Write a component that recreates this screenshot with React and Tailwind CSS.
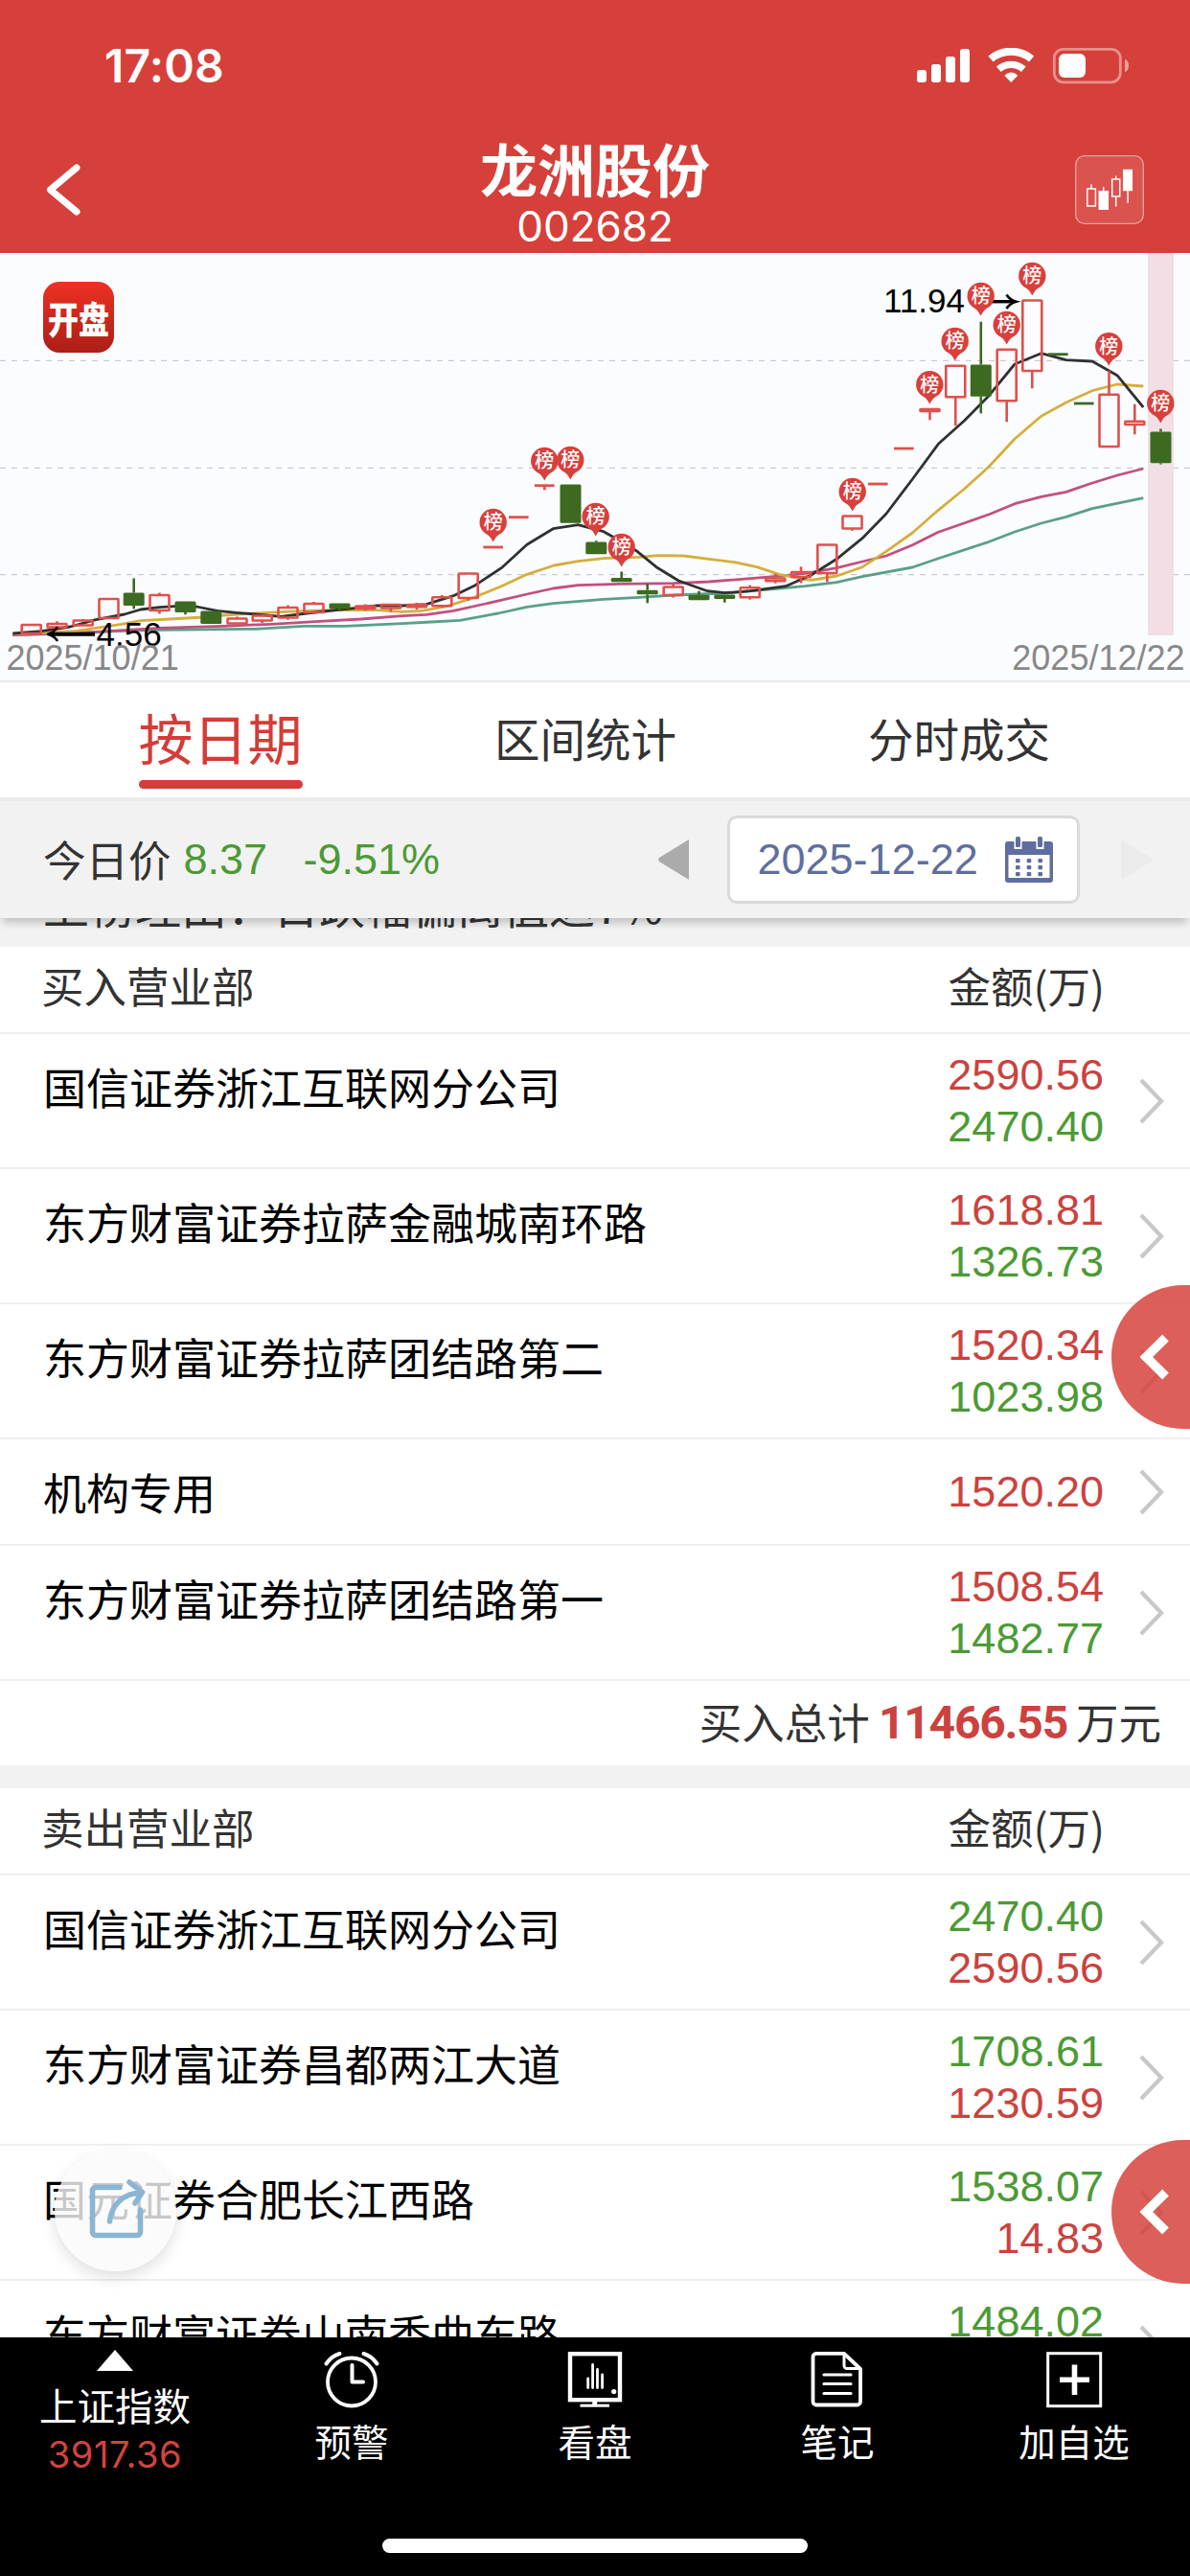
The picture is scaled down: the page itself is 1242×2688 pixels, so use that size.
import React from "react";

const RED = "#e0504b";
const GREEN = "#3c6a20";

// Scales a run of 3x grid points into chart coordinates, starting at (ox, oy).
const run = (ox, oy, pts) =>
  pts.map(([x, y]) => `${(ox + x / 3).toFixed(1)},${(oy + y / 3).toFixed(1)}`).join(" ");

const averages = [
  {
    color: "#5aa088",
    points: [
      run(0, 260, [[40, 1208], [220, 1203], [360, 1196], [500, 1192], [700, 1190], [800, 1189], [950, 1180], [1080, 1180]]),
      run(420, 420, [[0, 692], [90, 687], [180, 682], [300, 660], [390, 640], [472, 629], [630, 616], [740, 610], [850, 603], [1010, 597], [1180, 582], [1260, 575]]),
      run(840, 260, [[0, 1055], [100, 1043], [180, 1025], [337, 996], [418, 968], [577, 916], [657, 885], [740, 858], [818, 838], [900, 812], [1060, 779]]),
    ].join(" "),
  },
  {
    color: "#c2507f",
    points: [
      run(0, 260, [[40, 1208], [300, 1198], [500, 1186], [700, 1180], [850, 1174], [1000, 1165], [1130, 1158]]),
      run(420, 420, [[0, 668], [75, 664], [160, 652], [260, 630], [390, 600], [472, 582], [550, 572], [680, 568], [850, 566], [960, 561], [1090, 551], [1200, 542]]),
      run(840, 260, [[0, 1015], [100, 998], [180, 978], [255, 960], [337, 926], [418, 886], [500, 857], [577, 830], [657, 797], [740, 775], [818, 760], [900, 732], [978, 708], [1060, 687]]),
    ].join(" "),
  },
  {
    color: "#d5ae3c",
    points: [
      run(0, 260, [[40, 1205], [240, 1195], [380, 1174], [440, 1163], [530, 1158], [640, 1152], [700, 1146], [830, 1138], [960, 1132], [1060, 1130], [1180, 1130]]),
      run(420, 420, [[0, 655], [60, 652], [140, 638], [225, 610], [310, 575], [390, 538], [475, 510], [550, 497], [630, 488], [740, 484], [800, 479], [880, 480], [960, 490], [1040, 500], [1110, 515], [1180, 538]]),
      run(840, 260, [[0, 1034], [20, 1036], [100, 1023], [180, 995], [255, 946], [337, 888], [418, 817], [500, 750], [577, 680], [657, 594], [740, 523], [818, 480], [900, 443], [978, 423], [1060, 429]]),
    ].join(" "),
  },
  {
    color: "#2f3133",
    points: [
      run(0, 260, [[40, 1203], [130, 1196], [220, 1182], [300, 1160], [390, 1143], [440, 1128], [500, 1121], [560, 1117], [615, 1119], [680, 1132], [740, 1138], [800, 1143], [880, 1150], [960, 1140], [1040, 1131], [1110, 1124], [1180, 1116]]),
      run(420, 420, [[0, 636], [75, 632], [160, 605], [225, 574], [310, 518], [390, 445], [472, 395], [550, 383], [630, 404], [665, 424], [735, 466], [795, 515], [865, 558], [955, 590], [1010, 596], [1090, 590], [1200, 575]]),
      run(840, 260, [[20, 1020], [100, 970], [180, 905], [255, 828], [337, 720], [418, 610], [500, 536], [577, 458], [657, 360], [740, 326], [818, 347], [900, 351], [978, 395], [1060, 495]]),
    ].join(" "),
  },
];

// [centre x, body top, body bottom, high, low, direction]
const candles = [
  [32.7, 652, 661, 652, 661, "up"],
  [59.5, 651, 654.5, 648.3, 656, "up"],
  [86.7, 647.5, 652.5, 646, 652, "up"],
  [113.5, 625, 645, 625, 645, "up"],
  [139.7, 618.5, 632, 603.5, 635.3, "down"],
  [166.5, 621, 637, 618.5, 640.5, "up"],
  [193.5, 627.5, 639, 627.5, 641.3, "down"],
  [220.3, 637.5, 651, 637.5, 651, "down"],
  [247.5, 645.5, 650.5, 643.5, 652.5, "up"],
  [273.7, 642.5, 647.5, 641, 650, "up"],
  [300.5, 634, 644.5, 631.5, 646.8, "up"],
  [327.5, 630, 639, 628, 639, "up"],
  [354.5, 629.5, 635.3, 629.5, 637.3, "down"],
  [381.3, 632.5, 635, 630.5, 637.3, "up"],
  [408, 631, 634.5, 630, 638.5, "up"],
  [435, 631, 633.3, 629, 636, "up"],
  [461.3, 623.3, 632.3, 621, 634, "up"],
  [488.7, 598.5, 624, 598.5, 626.7, "up"],
  [514.7, 571, 571, 571, 571, "up"],
  [541.3, 539.7, 539.7, 539.7, 539.7, "up"],
  [568.3, 506.7, 506.7, 506, 511.3, "up"],
  [595.5, 505.5, 545.7, 505.5, 545.7, "down"],
  [622.3, 565.5, 578.2, 564, 578, "down"],
  [648.7, 603, 607.3, 596.5, 607, "down"],
  [675.7, 615.7, 620.3, 609, 629.3, "down"],
  [702.7, 612.5, 621, 610, 623.5, "up"],
  [729.5, 620.7, 626.3, 616.7, 626, "down"],
  [756.3, 620.5, 625, 620.5, 628.7, "down"],
  [782.7, 613.3, 623.3, 610.5, 625.7, "up"],
  [809.3, 603.5, 606.3, 598.7, 608.7, "up"],
  [836, 597, 602, 591.3, 608.5, "up"],
  [863.3, 568.5, 598, 568.5, 607.3, "up"],
  [889.5, 538.5, 551.5, 538.5, 553.8, "up"],
  [916.3, 505, 505, 505, 505, "up"],
  [943.3, 468, 468, 468, 468, "up"],
  [970.5, 427, 429, 427, 438.3, "up"],
  [997.3, 381.7, 414.3, 381.7, 444.3, "up"],
  [1023.8, 380.5, 413.7, 335.7, 431.3, "down"],
  [1050.7, 364.8, 418.3, 364.8, 440.3, "up"],
  [1077.3, 313.5, 387, 313.5, 405.3, "up"],
  [1104.3, 369.7, 369.7, 369.7, 369.7, "down"],
  [1131.3, 421, 421, 421, 421, "down"],
  [1157.5, 411.7, 466, 386.7, 466, "up"],
  [1184.3, 439.8, 443, 421.7, 453.3, "up"],
  [1211.5, 450.5, 483.3, 447.5, 484.5, "down"],
];

const pins = [
  [514.7, 545], [568.3, 481], [595.3, 480], [621.7, 539], [648.7, 571], [889.7, 513],
  [970.3, 401.3], [996.7, 356], [1023.7, 309], [1050.7, 339], [1077.3, 288], [1157.3, 361.3], [1211.3, 421],
];

function Candle({ d: [x, top, bottom, high, low, dir] }) {
  const up = dir === "up";
  const color = up ? RED : GREEN;
  if (top === bottom) {
    return (
      <g stroke={color} strokeWidth="2.8">
        <path d={`M${x - 10.3} ${top}h20.6`} />
        {low > bottom && <path d={`M${x} ${top}V${low}`} />}
      </g>
    );
  }
  return (
    <g stroke={color} strokeWidth="2.6">
      {high < top && <path d={`M${x} ${high}V${top}`} />}
      {low > bottom && <path d={`M${x} ${bottom}V${low}`} />}
      {up ? (
        <rect x={x - 10} y={top} width="20" height={bottom - top} rx="0.6" fill="none" />
      ) : (
        <rect x={x - 11} y={top} width="22" height={bottom - top} rx="1.5" fill={color} stroke="none" />
      )}
    </g>
  );
}

function Pin({ x, y }) {
  return (
    <g>
      <circle cx={x} cy={y} r="14.2" fill="#d8403c" />
      <path d={`M${x - 9.5} ${y + 10}Q${x - 3} ${y + 14} ${x} ${y + 20.5}Q${x + 3} ${y + 14} ${x + 9.5} ${y + 10}Z`} fill="#d8403c" />
      <text x={x} y={y + 7.2} textAnchor="middle" fill="#fff" className="font-['Noto_Sans_CJK_SC',sans-serif] text-[20px] font-medium">
        榜
      </text>
    </g>
  );
}

function Chart() {
  return (
    <section className="relative h-[448px] shrink-0 border-b-2 border-[#e9eaec] bg-[#fbfcff]">
      <svg viewBox="0 264 1242 446" className="block h-[446px] w-[1242px]" fill="none">
        {[376.3, 488.3, 599.7].map((y) => (
          <path key={y} d={`M0 ${y}H1242`} stroke="#c9cbd4" strokeWidth="1.2" strokeDasharray="6 6" />
        ))}
        <rect x="1198" y="264" width="27" height="399" fill="#f1dfe5" />
        {averages.map((a) => (
          <polyline key={a.color} points={a.points} stroke={a.color} strokeWidth="2.8" strokeLinejoin="round" />
        ))}
        {candles.map((d) => (
          <Candle key={d[0]} d={d} />
        ))}
        <g fill="#000" className="font-['Liberation_Sans',sans-serif] text-[35px]">
          <text x="922" y="326">11.94</text>
          <text x="100.5" y="673.7">4.56</text>
        </g>
        <g stroke="#000">
          <path d="M1030 314.7H1058" strokeWidth="3.4" />
          <path d="M1050.5 307.5Q1054 313 1060.5 314.7Q1054 316.5 1050.5 322" strokeWidth="2.6" />
          <path d="M99 661.7H52" strokeWidth="4" />
          <path d="M60 654Q57 660 49.5 661.7Q57 663.5 60 669" strokeWidth="2.6" />
        </g>
        {pins.map(([x, y]) => (
          <Pin key={x} x={x} y={y} />
        ))}
        <g fill="#888" className="font-['Liberation_Sans',sans-serif] text-[36px]">
          <text x="6.500" y="698.7">2025/10/21</text>
          <text x="1236.500" y="698.7" textAnchor="end">2025/12/22</text>
        </g>
      </svg>
      <div className="absolute left-[45px] top-[30px] flex h-[74px] w-[74px] items-center justify-center rounded-[17px] bg-linear-to-b from-[#ee3124] to-[#ab1f17]">
        <span className="scale-y-120 whitespace-nowrap text-[32px] leading-none font-black text-white">开盘</span>
      </div>
    </section>
  );
}

function Header() {
  return (
    <header className="flex h-[264px] shrink-0 flex-col bg-[#d6403a] text-white">
      <div className="flex h-[137px] items-center justify-between pr-[63px] pl-[109px]">
        <span className="font-['Inter',sans-serif] text-[48px] leading-none font-semibold tracking-[0.2px]">17:08</span>
        <svg viewBox="957 49 222 38" className="h-[38px] w-[222px]" fill="none">
          <g fill="#fff">
            <rect x="957" y="72" width="10" height="13" rx="3" />
            <rect x="972" y="66" width="10" height="19" rx="3" />
            <rect x="987" y="58" width="10" height="27" rx="3" />
            <rect x="1002" y="50" width="10" height="35" rx="3" />
            <path d="M1055.3 85L1048.3 77.7Q1055.3 71.3 1062.3 77.7Z" />
            <rect x="1105" y="55" width="28" height="25" rx="6" />
            <path d="M1174 60.7Q1178 62.5 1178 67.5T1174 74.3Z" opacity="0.5" />
          </g>
          <path d="M1034 60.5A33 33 0 0 1 1076.6 60.5" stroke="#fff" strokeWidth="8" />
          <path d="M1042.3 71.2A19.8 19.8 0 0 1 1068.3 71.2" stroke="#fff" strokeWidth="7.4" />
          <rect x="1100.3" y="50.3" width="69" height="34.5" rx="9.5" stroke="#fff" strokeWidth="2.8" opacity="0.42" />
        </svg>
      </div>
      <div className="flex flex-1 items-start justify-between px-[48px]">
        <svg viewBox="48 168 72 60" className="mt-[31px] h-[60px] w-[72px]" fill="none">
          <path d="M80 175L52.5 198L80 221" stroke="#fff" strokeWidth="7" strokeLinecap="round" strokeLinejoin="round" />
        </svg>
        <div className="flex flex-col items-center">
          <h1 className="mt-[6px] text-[60px] leading-[64px] font-bold">龙洲股份</h1>
          <span className="mt-[6px] font-['Inter',sans-serif] text-[44px] leading-[46px] font-normal">002682</span>
        </div>
        <svg viewBox="1122 162 72 72" className="mt-[25px] h-[72px] w-[72px]" fill="none">
          <rect x="1122.7" y="162.7" width="70.6" height="70.6" rx="9" fill="#fff" fillOpacity="0.1" stroke="#fff" strokeOpacity="0.5" strokeWidth="1.3" />
          <g stroke="#fff" strokeWidth="1.5">
            <rect x="1134.8" y="197" width="8.6" height="18" />
            <path d="M1139 192.3V197" />
            <rect x="1147.3" y="199.7" width="9" height="18.5" fill="#fff" />
            <path d="M1151.7 195V200" />
            <rect x="1160.7" y="187" width="8" height="18" />
            <path d="M1164.7 183.5V187M1164.7 205V215.5" />
            <rect x="1172.7" y="177.5" width="8.6" height="21" fill="#fff" />
            <path d="M1177 199V211.7" />
          </g>
        </svg>
      </div>
    </header>
  );
}

function Tabs() {
  return (
    <nav className="flex h-[120px] shrink-0 items-start bg-white text-[47.5px] leading-[116px] text-[#333]">
      <div className="flex w-[460px] flex-col items-center">
        <span className="h-[102px] text-[57px] leading-[113px] text-[#d43c37]">按日期</span>
        <span className="h-[9px] w-[171px] rounded-full bg-[#d43c3a]" />
      </div>
      <span className="w-[302px] text-center">区间统计</span>
      <span className="w-[478px] text-center">分时成交</span>
    </nav>
  );
}

function CalendarIcon() {
  return (
    <svg viewBox="0 0 52 50" className="h-[50px] w-[52px]" fill="#5f6e9e">
      <path d="M4 6H48a3 3 0 0 1 3 3V46a3 3 0 0 1-3 3H4a3 3 0 0 1-3-3V9a3 3 0 0 1 3-3Z" />
      <rect x="4.5" y="20" width="43" height="24" fill="#fff" />
      <path d="M10.5 0h8v14h-8zM33.5 0h8v14h-8z" fill="#fff" />
      <rect x="12" y="1" width="5" height="11" rx="1.5" />
      <rect x="35" y="1" width="5" height="11" rx="1.5" />
      {[24, 31, 38].map((y) =>
        [12, 23.7, 35.4].map((x) => <rect key={`${x}-${y}`} x={x} y={y} width="4.6" height="4.2" rx="1" />)
      )}
    </svg>
  );
}

function PriceBar() {
  return (
    <div className="relative z-10 flex h-[126px] shrink-0 items-center border-t-4 border-[#ebebeb] bg-[#f2f2f2] pl-[45px] shadow-[0_8px_8px_-3px_rgba(0,0,0,0.2)]">
      <span className="-mt-[3px] text-[44.5px] leading-[60px] text-[#333]">今日价</span>
      <span className="ml-[13px] w-[125px] font-['Liberation_Sans',sans-serif] text-[45px] leading-[60px] text-[#4c9a35]">8.37</span>
      <span className="w-[369px] font-['Liberation_Sans',sans-serif] text-[45px] leading-[60px] text-[#4c9a35]">-9.51%</span>
      <svg viewBox="0 0 34 44" className="h-[44px] w-[34px]">
        <path d="M33 1V43L2 24Q0 22 2 20Z" fill="#ababab" />
      </svg>
      <div className="ml-[39px] flex h-[92px] w-[368px] items-center rounded-[10px] border-[3px] border-[#dadada] bg-white pl-[29px]">
        <span className="font-['Liberation_Sans',sans-serif] text-[45px] leading-[60px] text-[#5f6e9e]">2025-12-22</span>
        <span className="ml-[27px]">
          <CalendarIcon />
        </span>
      </div>
      <svg viewBox="0 0 34 44" className="ml-[42px] h-[44px] w-[34px]">
        <path d="M1 1V43L32 24Q34 22 32 20Z" fill="#ebebeb" />
      </svg>
    </div>
  );
}

function ListHead({ title }) {
  return (
    <div className="flex h-[91px] shrink-0 items-center justify-between border-b-2 border-[#efefef] bg-white pr-[89px] pb-[9px] pl-[43px] text-[44.5px] leading-[60px] text-[#333]">
      <span>{title}</span>
      <span>金额(万)</span>
    </div>
  );
}

function Row({ name, values, buy }) {
  const colors = buy ? ["text-[#cb423e]", "text-[#4c9a35]"] : ["text-[#4c9a35]", "text-[#cb423e]"];
  const height = values.length > 1 ? "h-[141px]" : "h-[111px]";
  return (
    <div className={`flex shrink-0 border-b-2 border-[#efefef] bg-white pl-[45px] ${height}`}>
      <span className="flex-1 pt-[25px] text-[45px] leading-[60px] text-black">{name}</span>
      <div className="flex flex-col justify-center text-right font-['Liberation_Sans',sans-serif] text-[45px] leading-[54px]">
        {values.map((v, i) => (
          <span key={v} className={colors[i]}>
            {v}
          </span>
        ))}
      </div>
      <svg viewBox="0 0 28 48" className="mr-[26px] ml-[36px] h-[48px] w-[28px] self-center" fill="none">
        <path d="M3 2L24 24L3 46" stroke="#c8c8c8" strokeWidth="4.2" />
      </svg>
    </div>
  );
}

const buys = [
  ["国信证券浙江互联网分公司", ["2590.56", "2470.40"]],
  ["东方财富证券拉萨金融城南环路", ["1618.81", "1326.73"]],
  ["东方财富证券拉萨团结路第二", ["1520.34", "1023.98"]],
  ["机构专用", ["1520.20"]],
  ["东方财富证券拉萨团结路第一", ["1508.54", "1482.77"]],
];

const sells = [
  ["国信证券浙江互联网分公司", ["2470.40", "2590.56"]],
  ["东方财富证券昌都两江大道", ["1708.61", "1230.59"]],
  ["国元证券合肥长江西路", ["1538.07", "14.83"]],
  ["东方财富证券山南香曲东路", ["1484.02"]],
];

function Listing() {
  return (
    <main className="flex min-h-0 flex-1 flex-col overflow-hidden bg-[#f2f2f2]">
      <div className="flex h-[30px] shrink-0 items-end pb-[17px] pl-[45px]">
        <span className="whitespace-nowrap text-[48px] leading-[56px] text-[#333]">上榜理由：日跌幅偏离值达7%</span>
      </div>
      <ListHead title="买入营业部" />
      {buys.map(([name, values]) => (
        <Row key={name} name={name} values={values} buy />
      ))}
      <div className="mb-[24px] flex h-[88px] shrink-0 items-center justify-end bg-white pr-[30px] text-[44.5px] leading-[60px] text-[#333]">
        <span className="-mt-[4px]">买入总计</span>
        <span className="mx-[9px] font-['Roboto',sans-serif] text-[48px] leading-[60px] font-bold tracking-[-1.2px] text-[#cb423e]">11466.55</span>
        <span className="-mt-[4px]">万元</span>
      </div>
      <ListHead title="卖出营业部" />
      {sells.map(([name, values], i) => (
        <div key={name} className={i === 3 ? "-mb-px shrink-0" : "shrink-0"}>
          <Row name={name} values={i === 3 ? [...values, "\u00a0"] : values} />
        </div>
      ))}
    </main>
  );
}

function NavItem({ label, width, children }) {
  return (
    <div className={`flex flex-col items-center pt-[14px] ${width}`}>
      <svg viewBox="0 0 60 60" className="h-[60px] w-[60px]" fill="none" stroke="#fff">
        {children}
      </svg>
      <span className="mt-[8px] text-[38.5px] leading-[50px]">{label}</span>
    </div>
  );
}

function BottomNav() {
  return (
    <footer className="flex h-[249px] shrink-0 flex-col items-center justify-between bg-black pb-[24px] text-white">
      <div className="flex w-full">
        <div className="flex w-[240px] flex-col items-center pt-[13px]">
          <svg viewBox="0 0 38 22" className="h-[22px] w-[38px]">
            <path d="M19 0L38 22H0Z" fill="#fff" />
          </svg>
          <span className="mt-[10px] text-[39.5px] leading-[50px]">上证指数</span>
          <span className="mt-[3px] font-['Inter',sans-serif] text-[38px] leading-[48px] tracking-[0.6px] text-[#d2433f]">3917.36</span>
        </div>
        <NavItem label="预警" width="w-[254px]">
          <circle cx="30" cy="32.5" r="25" strokeWidth="3.8" />
          <path d="M30.5 15V32.5H42" strokeWidth="4" strokeLinecap="round" strokeLinejoin="round" />
          <path d="M3.5 13.5Q9 5.5 17.5 3M56.5 13.5Q51 5.5 42.5 3" strokeWidth="4" strokeLinecap="round" />
        </NavItem>
        <NavItem label="看盘" width="w-[254px]">
          <rect x="4" y="3.2" width="52" height="48" strokeWidth="4.4" />
          <path d="M22.7 29V38.5M27.6 14.5V38.5M32.5 19.5V38.5M37.6 25V38.5" strokeWidth="2.8" strokeLinecap="round" />
          <circle cx="49.7" cy="42.5" r="2.6" fill="#fff" stroke="none" />
          <path d="M29.7 52V56" strokeWidth="5" />
          <path d="M14.5 57.2H45" strokeWidth="3" />
        </NavItem>
        <NavItem label="笔记" width="w-[252px]">
          <path d="M8 2.8H37L54 19V53a3.5 3.5 0 0 1-3.5 3.5H8A3.5 3.5 0 0 1 4.5 53V6.3A3.5 3.5 0 0 1 8 2.8Z" strokeWidth="3.8" strokeLinejoin="round" />
          <path d="M37 3V15.500a3 3 0 0 0 3 3H54" strokeWidth="3" />
          <path d="M16 25H44M16 34.500H44M16 44.500H44" strokeWidth="3.2" strokeLinecap="round" />
        </NavItem>
        <NavItem label="加自选" width="w-[242px]">
          <rect x="2.700" y="2.700" width="55" height="55" strokeWidth="3" />
          <path d="M15 30.200H46M30.500 14.500V46" strokeWidth="5.600" />
        </NavItem>
      </div>
      <div className="h-[15px] w-[444px] rounded-full bg-white" />
    </footer>
  );
}

function Drawer({ place }) {
  return (
    <div className={`absolute left-[1160px] z-20 flex h-[150px] w-[82px] items-center overflow-hidden rounded-l-[75px] bg-[#d6403a]/84 ${place}`}>
      <svg viewBox="0 0 32 48" className="ml-[29px] h-[48px] w-[32px]" fill="none">
        <path d="M27.500 4L7.200 24L27.500 44" stroke="#fff" strokeWidth="9.500" />
      </svg>
    </div>
  );
}

export default function App() {
  return (
    <div className="relative flex h-[2688px] w-[1242px] flex-col overflow-hidden bg-white font-['Noto_Sans_CJK_SC',sans-serif] antialiased">
      <Header />
      <Chart />
      <Tabs />
      <PriceBar />
      <Listing />
      <BottomNav />
      <Drawer place="top-[1341px]" />
      <Drawer place="top-[2233px]" />
      <button className="absolute top-[2243px] left-[57px] z-20 flex h-[127px] w-[127px] items-center justify-center rounded-full bg-[#fafafa]/80 shadow-[0_6px_16px_rgba(0,0,0,0.13)]">
        <svg viewBox="90 2272 62 68" className="h-[68px] w-[62px] overflow-visible" fill="none" stroke="#8ab6d4" strokeWidth="5.600" strokeLinecap="round" strokeLinejoin="round">
          <path d="M125 2281.500H100a3.500 3.500 0 0 0-3.500 3.500V2328a3.500 3.500 0 0 0 3.500 3.500H143a3.500 3.500 0 0 0 3.500-3.500V2305" />
          <path d="M114.500 2317C116 2300 128 2288 148 2286.500M135 2276L148.500 2286.500L141 2298" />
        </svg>
      </button>
    </div>
  );
}
